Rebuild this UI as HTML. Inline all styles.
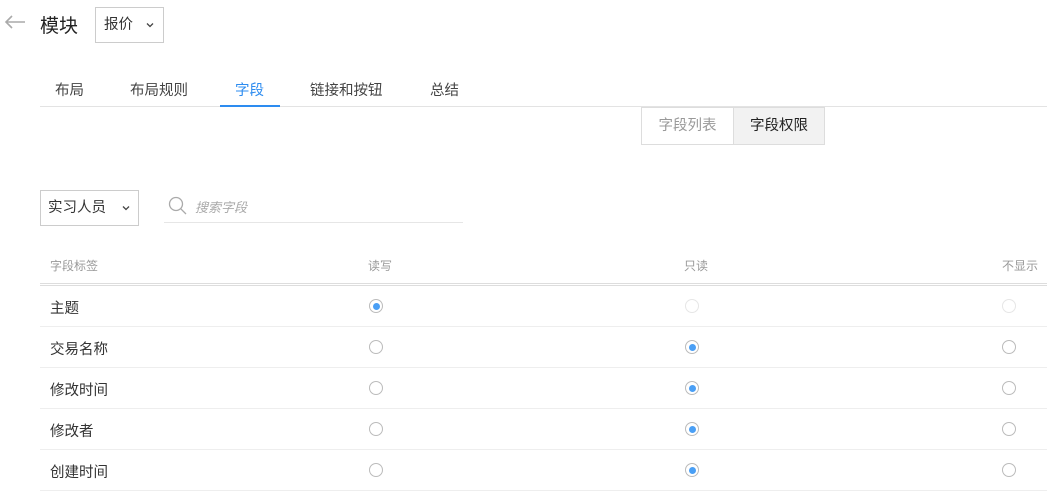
<!DOCTYPE html>
<html><head><meta charset="utf-8"><style>
*{margin:0;padding:0;box-sizing:border-box}
body{width:1047px;height:493px;background:#fff;font-family:"Liberation Sans","Noto Sans CJK SC",sans-serif;position:relative;overflow:hidden;color:#333}
.a{position:absolute;white-space:nowrap}
.tab{position:absolute;top:79px;font-size:14.5px;color:#444}
.r{position:absolute;width:14px;height:14px;border:1px solid #bbb;border-radius:50%;background:#fff}
.r.on::after{content:"";position:absolute;left:2.5px;top:2.5px;width:7px;height:7px;border-radius:50%;background:#4a9ff5}
.r.dis{border-color:#e6e6e6}
.line{position:absolute;left:40px;width:1007px;height:1px;background:#eee}
.lbl{position:absolute;left:50px;font-size:14.5px;color:#333}
.chev{position:absolute;top:14px}
</style></head><body>
<svg class="a" style="left:4px;top:14px" width="22" height="16" viewBox="0 0 22 16"><path d="M21 8H2M8 2L2 8l6 6" fill="none" stroke="#aaa" stroke-width="1.6"/></svg>
<div class="a" style="left:40px;top:11px;font-size:19px;color:#222">模块</div>
<div class="a" style="left:95px;top:7px;width:69px;height:36px;border:1px solid #ccc;font-size:14.5px;line-height:34px;padding-left:8px;color:#333">报价<svg class="chev" style="right:9px" width="8" height="6" viewBox="0 0 8 6"><path d="M1 1.5l3 3 3-3" fill="none" stroke="#444" stroke-width="1.3"/></svg></div>
<div class="tab" style="left:55px">布局</div>
<div class="tab" style="left:130px">布局规则</div>
<div class="tab" style="left:235px;color:#2d8cf0">字段</div>
<div class="tab" style="left:310px">链接和按钮</div>
<div class="tab" style="left:430px">总结</div>
<div class="a" style="left:40px;top:106px;width:1007px;height:1px;background:#e3e3e3"></div>
<div class="a" style="left:220px;top:105px;width:60px;height:2px;background:#2d8cf0"></div>
<div class="a" style="left:641px;top:107px;width:92px;height:38px;border:1px solid #ddd;border-right:none;font-size:14.5px;line-height:36px;text-align:center;color:#999">字段列表</div>
<div class="a" style="left:733px;top:107px;width:92px;height:38px;border:1px solid #ddd;background:#f2f2f2;font-size:14.5px;line-height:36px;text-align:center;color:#222">字段权限</div>
<div class="a" style="left:40px;top:190px;width:99px;height:36px;border:1px solid #ccc;font-size:14.5px;line-height:34px;padding-left:7px;color:#333">实习人员<svg class="chev" style="right:8px" width="8" height="6" viewBox="0 0 8 6"><path d="M1 1.5l3 3 3-3" fill="none" stroke="#444" stroke-width="1.3"/></svg></div>
<svg class="a" style="left:168px;top:196px" width="20" height="20" viewBox="0 0 20 20"><circle cx="8" cy="8" r="6.5" fill="none" stroke="#aaa" stroke-width="1.3"/><path d="M12.8 12.8L18 18" stroke="#aaa" stroke-width="1.3"/></svg>
<div class="a" style="left:195px;top:197px;font-size:13px;color:#aaa;font-style:italic">搜索字段</div>
<div class="a" style="left:164px;top:222px;width:299px;height:1px;background:#e6e6e6"></div>
<div class="a" style="left:50px;top:257px;font-size:12px;color:#999">字段标签</div>
<div class="a" style="left:368px;top:257px;font-size:12px;color:#999">读写</div>
<div class="a" style="left:684px;top:257px;font-size:12px;color:#999">只读</div>
<div class="a" style="left:1002px;top:257px;font-size:12px;color:#999">不显示</div>
<div class="line" style="top:283px;background:#ddd"></div>
<div class="line" style="top:285px;background:#ddd"></div>
<div class="lbl" style="top:297px">主题</div>
<div class="r on" style="left:369px;top:299px"></div><div class="r dis" style="left:685px;top:299px"></div><div class="r dis" style="left:1002px;top:299px"></div>
<div class="line" style="top:326px"></div>
<div class="lbl" style="top:338px">交易名称</div>
<div class="r" style="left:369px;top:340px"></div><div class="r on" style="left:685px;top:340px"></div><div class="r" style="left:1002px;top:340px"></div>
<div class="line" style="top:367px"></div>
<div class="lbl" style="top:379px">修改时间</div>
<div class="r" style="left:369px;top:381px"></div><div class="r on" style="left:685px;top:381px"></div><div class="r" style="left:1002px;top:381px"></div>
<div class="line" style="top:408px"></div>
<div class="lbl" style="top:420px">修改者</div>
<div class="r" style="left:369px;top:422px"></div><div class="r on" style="left:685px;top:422px"></div><div class="r" style="left:1002px;top:422px"></div>
<div class="line" style="top:449px"></div>
<div class="lbl" style="top:461px">创建时间</div>
<div class="r" style="left:369px;top:463px"></div><div class="r on" style="left:685px;top:463px"></div><div class="r" style="left:1002px;top:463px"></div>
<div class="line" style="top:490px"></div>
</body></html>
